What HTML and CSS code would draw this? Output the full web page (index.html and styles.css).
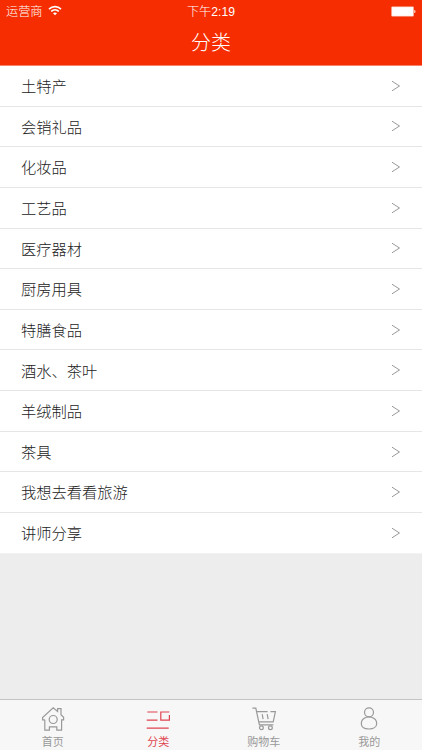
FILE: index.html
```html
<!DOCTYPE html>
<html lang="zh-CN">
<head>
<meta charset="utf-8">
<title>分类</title>
<link rel="stylesheet" href="styles.css">
</head>
<body>
<div class="app">
  <header class="header">
    <div class="status">
      <div class="carrier"><span>运营商</span>
        <svg class="wifi" width="14" height="11" viewBox="0 0 14 11" fill="none" stroke="#fff" stroke-width="1.7"><path d="M1 4.1C4.4.7 9.6.7 13 4.1M3.2 6.4c2.2-2.1 5.4-2.1 7.6 0"/><path d="M7 10.2 5 8.2c1.1-1.1 2.9-1.1 4 0z" fill="#fff" stroke="none"/></svg>
      </div>
      <div class="time">下午<span class="digits">2:19</span></div>
      <div class="power"><svg width="25" height="11" viewBox="0 0 25 11" fill="#fff"><rect x=".3" y=".5" width="22.5" height="10" rx="1" opacity=".75"/><rect x="1.1" y="1.2" width="20.9" height="8.6"/><path d="M23.4 4h.6q.9 1.5 0 3h-.6z"/></svg></div>
    </div>
    <h1 class="title">分类</h1>
  </header>
  <ul class="list">
    <li class="row"><span>土特产</span><svg class="chevron" viewBox="0 0 10 12"><path d="M1 1.2 8.5 6 1 10.8"/></svg></li>
    <li class="row"><span>会销礼品</span><svg class="chevron" viewBox="0 0 10 12"><path d="M1 1.2 8.5 6 1 10.8"/></svg></li>
    <li class="row"><span>化妆品</span><svg class="chevron" viewBox="0 0 10 12"><path d="M1 1.2 8.5 6 1 10.8"/></svg></li>
    <li class="row"><span>工艺品</span><svg class="chevron" viewBox="0 0 10 12"><path d="M1 1.2 8.5 6 1 10.8"/></svg></li>
    <li class="row"><span>医疗器材</span><svg class="chevron" viewBox="0 0 10 12"><path d="M1 1.2 8.5 6 1 10.8"/></svg></li>
    <li class="row"><span>厨房用具</span><svg class="chevron" viewBox="0 0 10 12"><path d="M1 1.2 8.5 6 1 10.8"/></svg></li>
    <li class="row"><span>特膳食品</span><svg class="chevron" viewBox="0 0 10 12"><path d="M1 1.2 8.5 6 1 10.8"/></svg></li>
    <li class="row"><span>酒水、茶叶</span><svg class="chevron" viewBox="0 0 10 12"><path d="M1 1.2 8.5 6 1 10.8"/></svg></li>
    <li class="row"><span>羊绒制品</span><svg class="chevron" viewBox="0 0 10 12"><path d="M1 1.2 8.5 6 1 10.8"/></svg></li>
    <li class="row"><span>茶具</span><svg class="chevron" viewBox="0 0 10 12"><path d="M1 1.2 8.5 6 1 10.8"/></svg></li>
    <li class="row"><span>我想去看看旅游</span><svg class="chevron" viewBox="0 0 10 12"><path d="M1 1.2 8.5 6 1 10.8"/></svg></li>
    <li class="row"><span>讲师分享</span><svg class="chevron" viewBox="0 0 10 12"><path d="M1 1.2 8.5 6 1 10.8"/></svg></li>
  </ul>
  <nav class="tabs">
    <a class="tab"><svg class="icon" viewBox="0 0 26 26"><path d="M4.8 13.8v10.3h4.6v-3.3h7.4v3.3h4.8V13.8h2v-2.6l-2.6-2.5V2.6h-3.4v2.8L13.2 1.8 2.6 11.6v2.2h2.2"/><circle cx="13.2" cy="13.5" r="4"/></svg><span>首页</span></a>
    <a class="tab active"><svg class="icon" viewBox="0 0 26 26"><path d="M2.3 6h10.2M1.7 14.2h10.8M24.4 6h-8.6v8.2h8.6V9M1.7 22.2h22"/></svg><span>分类</span></a>
    <a class="tab"><svg class="icon" viewBox="0 0 26 26"><path d="M1.4 2.2h3.4l3.6 16.6h14M6 5.6h10.6M19.4 5.6h5l-2.2 10.2H8M11.2 8.2l.9 5M16.2 8.2l.9 5"/><circle cx="10.4" cy="21.7" r="1.9"/><circle cx="19.4" cy="21.7" r="1.9"/></svg><span>购物车</span></a>
    <a class="tab"><svg class="icon" viewBox="0 0 26 26"><circle cx="13" cy="6.3" r="4.5"/><path d="M10.5 11.3C7.6 12.2 5.3 14.7 5.3 17.5c0 3.6 3.3 5.5 7.7 5.5s7.7-1.9 7.7-5.5c0-2.8-2.3-5.3-5.2-6.2q-2.5-.8-5 0z"/></svg><span>我的</span></a>
  </nav>
</div>
</body>
</html>
```
FILE: styles.css
```css
* { box-sizing: border-box; }
body {
  margin: 0;
  font-family: "Noto Sans CJK SC", sans-serif;
}
.app {
  display: flex;
  flex-direction: column;
  height: 750px;
  background: #ededed;
  overflow: hidden;
}
.header {
  height: 66px;
  flex: none;
  background: #f62d00;
  border-bottom: 1px solid #f9806a;
  color: #fff;
}
.status {
  display: grid;
  grid-template-columns: 1fr auto 1fr;
  height: 22px;
  padding: 0 6px;
  align-items: center;
  font-size: 12.2px;
  line-height: 20px;
  font-weight: 300;
}
.carrier { display: flex; align-items: center; gap: 5px; }
.wifi { margin-top: -2px; }
.digits { font-family: "Liberation Sans", sans-serif; font-weight: 400; }
.power { display: flex; justify-content: flex-end; }
.title {
  margin: 0;
  text-align: center;
  font-size: 20px;
  line-height: 40px;
  font-weight: 300;
}
.list { margin: 0; padding: 0; list-style: none; flex: none; }
.row {
  display: flex;
  align-items: center;
  justify-content: space-between;
  height: 40.65px;
  padding: 0 21px;
  background: #fff;
  border-bottom: 1px solid #e6e6e6;
  color: #222;
  font-size: 15.25px;
  line-height: 24px;
  font-weight: 300;
}
.row span { margin-top: -1.5px; }
.row:last-child { border-bottom-color: #f2f2f2; }
.chevron {
  width: 10px;
  height: 12px;
  fill: none;
  stroke: #999;
  stroke-width: 1;
}
.tabs {
  display: flex;
  height: 51px;
  margin-top: auto;
  flex: none;
  background: #f7f7f7;
  border-top: 1px solid #c4c4c4;
}
.tab {
  flex: 1;
  display: flex;
  flex-direction: column;
  align-items: center;
  padding-top: 6px;
  color: #999;
  font-size: 11px;
  line-height: 18px;
}
.active { color: #e04450; }
.icon {
  width: 26px;
  height: 26px;
  fill: none;
  stroke: currentColor;
  stroke-width: 1.2;
}
```
